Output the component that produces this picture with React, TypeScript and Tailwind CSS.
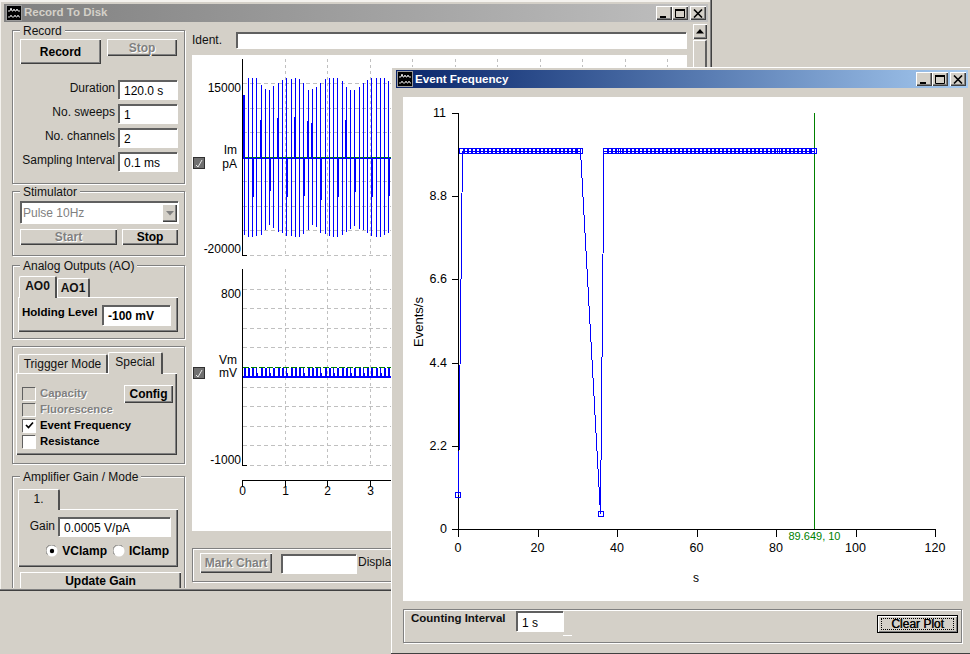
import React from "react";

const raised = "shadow-[inset_1px_1px_0_#fff,inset_-1px_-1px_0_#404040,inset_-2px_-2px_0_#808080]";
const sunken = "bg-white border-t-2 border-l-2 border-t-[#606060] border-l-[#606060] shadow-[1px_1px_0_#fff]";
const disabledText = "text-[#808080] [text-shadow:1px_1px_0_#fff]";

function Group({ label, className, children }: { label?: string; className: string; children?: React.ReactNode }) {
  return (
    <div className={"relative shrink-0 border border-[#808080] shadow-[inset_1px_1px_0_#fff,1px_1px_0_#fff] " + className}>
      {label && (
        <span className="absolute left-[7px] -top-[6px] bg-[#d4d0c8] px-[3px] text-[12px] leading-[13px] whitespace-nowrap text-[#111]">
          {label}
        </span>
      )}
      {children}
    </div>
  );
}

function Btn({ children, className, disabled, bold = true }: { children: React.ReactNode; className: string; disabled?: boolean; bold?: boolean }) {
  return (
    <div
      className={
        "flex shrink-0 items-center justify-center text-[12px] bg-[#d4d0c8] " +
        (bold ? "font-bold " : "") +
        raised + " " + (disabled ? disabledText + " " : "text-black ") + className
      }
    >
      {children}
    </div>
  );
}

function Field({ value, className, bold }: { value?: string; className: string; bold?: boolean }) {
  return (
    <div className={"flex shrink-0 items-center pl-[4px] pt-[1px] text-[12px] text-black whitespace-nowrap overflow-hidden " + (bold ? "font-bold " : "") + sunken + " " + className}>
      {value}
    </div>
  );
}

function LabelRow({ label, value }: { label: string; value: string }) {
  return (
    <div className="flex h-[19px] items-center justify-end gap-[3px] pr-[7px]">
      <span className="text-[12px] leading-none -mt-[3px] whitespace-nowrap text-[#111]">{label}</span>
      <Field value={value} className="w-[59px] h-[19px]" />
    </div>
  );
}

function Tab({ label, active, className }: { label: string; active?: boolean; className: string }) {
  return (
    <div
      className={
        "flex items-center justify-center rounded-t-[2px] border-t border-l border-t-white border-l-white border-r-2 border-r-[#505050] text-[12px] bg-[#d4d0c8] whitespace-nowrap text-[#111] " +
        (active ? "relative z-10 -mb-px " : "") +
        className
      }
    >
      {label}
    </div>
  );
}

function Check({ label, checked, disabled }: { label: string; checked?: boolean; disabled?: boolean }) {
  return (
    <div className="flex h-[16px] items-center gap-[5px]">
      <div className={"flex h-[13px] w-[13px] shrink-0 items-center justify-center border-t border-l border-t-[#606060] border-l-[#606060] shadow-[1px_1px_0_#fff] " + (disabled ? "bg-[#d4d0c8]" : "bg-white")}>
        {checked && (
          <svg width="9" height="9" viewBox="0 0 9 9">
            <path d="M1 4 L3.5 6.5 L8 1.5" fill="none" stroke="#000" strokeWidth="1.7" />
          </svg>
        )}
      </div>
      <span className={"text-[11.3px] font-bold whitespace-nowrap " + (disabled ? disabledText : "text-black")}>{label}</span>
    </div>
  );
}

function Radio({ label, on }: { label: string; on?: boolean }) {
  return (
    <div className="flex items-center gap-[4px]">
      <svg width="12" height="12" viewBox="0 0 12 12">
        <circle cx="6" cy="6" r="5.5" fill="#fff" />
        <path d="M1.5 9.5 A5.5 5.5 0 0 1 9.5 1.5" fill="none" stroke="#808080" strokeWidth="1" />
        {on && <circle cx="6" cy="6" r="2.2" fill="#000" />}
      </svg>
      <span className="text-[12px] font-bold text-black">{label}</span>
    </div>
  );
}

function AppIcon({ className }: { className: string }) {
  return (
    <svg viewBox="0 0 16 16" className={"shrink-0 " + className}>
      <rect x="0" y="0" width="16" height="16" fill="#000" />
      <rect x="0.5" y="0.5" width="15" height="15" fill="none" stroke="#9a9a9a" strokeWidth="1" />
      <path d="M2 6 H4 L5 3 L6 6 H7 L8 4 L9 6 H10 L11 4 L12 6 H14" fill="none" stroke="#e0e0e0" strokeWidth="1" />
      <path d="M2 12 H4 L5 10 L6 12 H8 L9 10 L10 12 H11 L12 10 L13 12 H14" fill="none" stroke="#c8c8c8" strokeWidth="1" />
    </svg>
  );
}

function WinButtons() {
  return (
    <div className="ml-auto flex items-center pr-[2px]">
      <div className={"flex h-[14px] w-[16px] items-center justify-center bg-[#d4d0c8] " + raised}>
        <svg width="10" height="9" viewBox="0 0 10 9"><rect x="1" y="7" width="6" height="2" fill="#000" /></svg>
      </div>
      <div className={"flex h-[14px] w-[16px] items-center justify-center bg-[#d4d0c8] " + raised}>
        <svg width="10" height="9" viewBox="0 0 10 9"><path d="M0.5 1 H9.5 V8.5 H0.5 Z" fill="none" stroke="#000" /><rect x="0" y="0" width="10" height="2" fill="#000" /></svg>
      </div>
      <div className={"ml-[2px] flex h-[14px] w-[16px] items-center justify-center bg-[#d4d0c8] " + raised}>
        <svg width="10" height="9" viewBox="0 0 10 9"><path d="M1 0.5 L9 8.5 M9 0.5 L1 8.5" fill="none" stroke="#000" strokeWidth="1.6" /></svg>
      </div>
    </div>
  );
}

const tops = [285,235,235,235,255,268,270,258,250,240,235,237,235,238,250,270,268,260,250,238,235,235,235,243,260,270,270,262,250,240,235,235,235,235,243];
const bots = [705,710,710,708,705,690,675,685,695,700,707,708,710,710,703,690,675,680,700,703,707,710,710,705,695,688,677,687,690,700,708,710,710,706,700];
const thickTop: Record<number, number> = { 0: 285, 4: 360, 8: 355, 12: 352, 15: 362, 16: 370, 24: 360 };
const thickBot: Record<number, number> = { 2: 590, 6: 572, 10: 590, 14: 587, 18: 600, 22: 590, 26: 575, 30: 590, 34: 587 };
const spikeX = (i: number) => Math.round(243.7 + 4.256 * i) + 0.5;
const gridX = [285.5, 327.5, 370.5, 412.5, 455.5, 497.5, 540.5, 582.5, 625.5, 667.5];

function RecordChart() {
  const g1 = [83.5, 108.5, 132.5, 181.5, 206.5, 230.5, 255.5];
  const g2 = [289.5, 308.5, 328.5, 347.5, 387.5, 406.5, 426.5, 445.5, 465.5];
  const shortBars = [3, 6, 10, 14, 18, 21, 25, 28, 32];
  return (
    <svg viewBox="192 55 495 476" className="block h-[476px] w-[495px]" shapeRendering="crispEdges">
      {gridX.map((x) => (
        <g key={x} stroke="#c0c0c0" strokeDasharray="3 3">
          <line x1={x} x2={x} y1={59} y2={255} />
          <line x1={x} x2={x} y1={269} y2={466} />
        </g>
      ))}
      {[...g1, ...g2].map((y) => (
        <line key={y} x1={243} x2={687} y1={y} y2={y} stroke="#c0c0c0" strokeDasharray="4 3" />
      ))}
      <line x1={243} x2={687} y1={157.5} y2={157.5} stroke="#008000" />
      {tops.map((t, i) => (
        <line key={"a" + i} x1={spikeX(i)} x2={spikeX(i)} y1={t / 3} y2={bots[i] / 3} stroke="#0000ff" />
      ))}
      {Object.entries(thickTop).map(([i, t]) => (
        <line key={"t" + i} x1={spikeX(+i) - 1} x2={spikeX(+i) - 1} y1={t / 3} y2={158} stroke="#0000ff" />
      ))}
      {Object.entries(thickBot).map(([i, t]) => (
        <line key={"b" + i} x1={spikeX(+i) + 1} x2={spikeX(+i) + 1} y1={158} y2={t / 3} stroke="#0000ff" />
      ))}
      <rect x={243} y={158} width={444} height={1} fill="#0000ff" />
      <line x1={243} x2={687} y1={367.5} y2={367.5} stroke="#008000" strokeDasharray="6 2" />
      {tops.map((_, i) => (
        <g key={"v" + i} stroke="#0000ff">
          <line x1={spikeX(i)} x2={spikeX(i)} y1={368} y2={377} />
          <line x1={spikeX(i) + 1} x2={spikeX(i) + 1} y1={shortBars.includes(i) ? 373 : 368} y2={377} />
        </g>
      ))}
      <rect x={243} y={376} width={444} height={2} fill="#0000ff" />
      <g stroke="#000">
        <line x1={242.5} x2={242.5} y1={59} y2={255.5} />
        <line x1={242.5} x2={247} y1={255.5} y2={255.5} />
        <line x1={242.5} x2={242.5} y1={269} y2={465.5} />
        <line x1={242.5} x2={247} y1={465.5} y2={465.5} />
        <line x1={242.5} x2={687} y1={480.5} y2={480.5} />
        {[242.5, ...gridX].map((x) => (
          <line key={x} x1={x} x2={x} y1={480} y2={487} />
        ))}
      </g>
      <g fontSize="12" fill="#000" textAnchor="end" dominantBaseline="central" shapeRendering="auto">
        <text x={241} y={88}>15000</text>
        <text x={241} y={249}>-20000</text>
        <text x={241} y={294}>800</text>
        <text x={241} y={460}>-1000</text>
        <text x={237} y={150}>Im</text>
        <text x={237} y={164}>pA</text>
        <text x={237} y={360}>Vm</text>
        <text x={237} y={373}>mV</text>
      </g>
      <g fontSize="12" fill="#000" textAnchor="middle" dominantBaseline="central" shapeRendering="auto">
        {[0, 1, 2, 3, 4, 5, 6, 7, 8, 9, 10].map((n, i) => (
          <text key={n} x={[242.5, ...gridX][i]} y={491}>{n}</text>
        ))}
      </g>
      {[157, 367].map((y) => (
        <g key={y}>
          <rect x={193.5} y={y + 0.5} width={11} height={11} rx={1} fill="#707070" stroke="#303030" />
          <path d={`M196 ${y + 8} L198 ${y + 10} L202 ${y + 3}`} fill="none" stroke="#e8e8e8" shapeRendering="auto" />
        </g>
      ))}
    </svg>
  );
}

function FreqChart() {
  const xs: number[] = [];
  for (let s = 1; s <= 30; s++) xs.push(458.5 + 3.975 * s);
  xs.push(580);
  for (let s = 37; s <= 89; s++) xs.push(458.5 + 3.975 * s);
  xs.push(814);
  const ys = [
    ["11", 113], ["8.8", 196], ["6.6", 279], ["4.4", 363], ["2.2", 446], ["0", 529],
  ] as const;
  const squares = xs.map((x) => Math.round(x));
  return (
    <svg viewBox="403 97 560 504" className="block h-[504px] w-[560px]">
      <g shapeRendering="crispEdges">
        <line x1={814.5} x2={814.5} y1={113} y2={529} stroke="#008000" />
        <line x1={458.5} x2={458.5} y1={113} y2={529} stroke="#000" />
        <line x1={458} x2={936} y1={529.5} y2={529.5} stroke="#000" />
        {ys.map(([, y]) => (
          <line key={y} x1={452} x2={458} y1={y + 0.5} y2={y + 0.5} stroke="#000" />
        ))}
        {[0, 20, 40, 60, 80, 100, 120].map((n) => (
          <line key={n} x1={Math.round(458 + 3.975 * n) + 0.5} x2={Math.round(458 + 3.975 * n) + 0.5} y1={529} y2={537} stroke="#000" />
        ))}
      </g>
      <path d="M458.5 495 L462.5 151 H580.5 L600.5 514 L604 151 H815" fill="none" stroke="#0000ff" strokeWidth="1" shapeRendering="crispEdges" />
      <g shapeRendering="crispEdges" fill="none" stroke="#0000ff">
        {squares.map((x) => (
          <rect key={x} x={x - 2.5} y={148.5} width={5} height={5} />
        ))}
        <rect x={455.5} y={492.5} width={5} height={5} />
        <rect x={598.5} y={511.5} width={5} height={5} />
      </g>
      <g fontSize="12.5" fill="#000" textAnchor="end" dominantBaseline="central">
        {ys.map(([t, y]) => (
          <text key={t} x={t === "11" ? 446 : 447} y={y}>{t}</text>
        ))}
      </g>
      <g fontSize="12.5" fill="#000" textAnchor="middle" dominantBaseline="central">
        {[0, 20, 40, 60, 80, 100, 120].map((n) => (
          <text key={n} x={458 + 3.975 * n} y={548}>{n}</text>
        ))}
        <text x={696} y={578} fontSize="12">s</text>
        <text x={418} y={322} fontSize="13" transform="rotate(-90 418 322)">Events/s</text>
      </g>
      <text x={814.5} y={536} fontSize="11" fill="#008000" textAnchor="middle" dominantBaseline="central">89.649, 10</text>
    </svg>
  );
}

function RecordWindow() {
  return (
    <div className="absolute left-0 top-0 h-[591px] w-[712px] bg-[#d4d0c8] pt-[4px] shadow-[inset_-1px_-1px_0_#404040,inset_-2px_-2px_0_#808080,inset_1px_2px_0_#f4f2ee]">
      <div className="ml-[4px] mr-[4px] flex h-[18px] items-center bg-gradient-to-r from-[#808080] to-[#c0c0c0] pl-[2px]">
        <AppIcon className="h-[16px] w-[16px]" />
        <span className="ml-[2px] text-[11.5px] font-bold text-[#d4d0c8]">Record To Disk</span>
        <WinButtons />
      </div>
      <div className="flex h-[566px] overflow-hidden pl-[12px]">
        <div className="flex w-[173px] shrink-0 flex-col pt-[8px]">
          <Group label="Record" className="h-[154px]">
            <div className="flex items-start gap-[6px] pl-[7px] pt-[8px]">
              <Btn className="h-[25px] w-[81px]">Record</Btn>
              <Btn disabled className="h-[17px] w-[70px]">Stop</Btn>
            </div>
            <div className="mt-[16px] flex flex-col gap-[5px]">
              <LabelRow label="Duration" value="120.0 s" />
              <LabelRow label="No. sweeps" value="1" />
              <LabelRow label="No. channels" value="2" />
              <LabelRow label="Sampling Interval" value="0.1 ms" />
            </div>
          </Group>
          <Group label="Stimulator" className="mt-[7px] h-[65px]">
            <div className="ml-[7px] mt-[9px] flex h-[22px] w-[158px] items-center justify-between pl-[1px] pr-[1px] text-[12px] text-[#808080] bg-white border-t-2 border-l-2 border-t-[#606060] border-l-[#606060] shadow-[1px_1px_0_#fff]">
              <span>Pulse 10Hz</span>
              <div className={"flex h-[18px] w-[15px] items-center justify-center bg-[#d4d0c8] " + raised}>
                <svg width="8" height="5" viewBox="0 0 8 5"><path d="M0 0 H8 L4 4.5 Z" fill="#808080" /></svg>
              </div>
            </div>
            <div className="ml-[7px] mt-[6px] flex gap-[5px]">
              <Btn disabled className="h-[16px] w-[97px]">Start</Btn>
              <Btn className="h-[16px] w-[56px]">Stop</Btn>
            </div>
          </Group>
          <Group label="Analog Outputs (AO)" className="mt-[9px] h-[74px]">
            <div className="ml-[6px] mt-[9px] flex h-[22px] items-end">
              <Tab active label="AO0" className="h-[22px] w-[38px] pb-[4px] font-bold" />
              <Tab label="AO1" className="h-[19px] w-[33px] pb-[1px] font-bold" />
            </div>
            <div className={"ml-[5px] flex h-[35px] w-[160px] items-center pl-[4px] " + raised}>
              <span className="w-[80px] shrink-0 text-[11.5px] font-bold whitespace-nowrap -mt-[3px] text-black">Holding Level</span>
              <Field bold value="-100 mV" className="h-[20px] w-[68px]" />
            </div>
          </Group>
          <Group className="mt-[7px] h-[118px]">
            <div className="ml-[5px] mt-[4px] flex h-[22px] items-end">
              <Tab label="Triggger Mode" className="h-[19px] w-[90px]" />
              <Tab active label="Special" className="h-[22px] w-[55px] pb-[3px]" />
            </div>
            <div className={"ml-[3px] flex h-[82px] w-[161px] items-start pl-[6px] pr-[4px] pt-[12px] " + raised}>
              <div className="flex w-[100px] shrink-0 flex-col">
                <Check disabled label="Capacity" />
                <Check disabled label="Fluorescence" />
                <Check checked label="Event Frequency" />
                <Check label="Resistance" />
              </div>
              <Btn className="relative ml-auto h-[18px] w-[49px]">Config</Btn>
            </div>
          </Group>
          <Group label="Amplifier Gain / Mode" className="mt-[12px] h-[130px]">
            <div className="ml-[5px] mt-[11px] flex h-[21px] items-end">
              <Tab active label="1." className="h-[21px] w-[42px] pb-[2px]" />
            </div>
            <div className={"ml-[5px] flex h-[58px] w-[160px] flex-col pt-[8px] " + raised}>
              <div className="flex items-center justify-end pr-[8px]">
                <span className="mr-[3px] -mt-[2px] text-[12px] text-[#111]">Gain</span>
                <Field value="0.0005 V/pA" className="h-[19px] w-[112px]" />
              </div>
              <div className="mt-[6px] flex items-center justify-end gap-[6px] pr-[9px]">
                <Radio on label="VClamp" />
                <Radio label="IClamp" />
              </div>
            </div>
            <Btn className="ml-[7px] mt-[5px] h-[24px] w-[161px] pb-[7px]">Update Gain</Btn>
          </Group>
        </div>
        <div className="ml-[7px] flex w-[495px] shrink-0 flex-col pt-[10px]">
          <div className="flex h-[16px] items-center">
            <span className="w-[44px] text-[12px] text-[#111]">Ident.</span>
            <Field className="h-[16px] w-[450px]" />
          </div>
          <div className="mt-[7px] h-[476px] shrink-0 bg-white">
            <RecordChart />
          </div>
          <Group className="mt-[17px] h-[34px] w-[495px]">
            <div className="flex items-start pl-[7px] pt-[4px]">
              <Btn disabled className="h-[20px] w-[72px]">Mark Chart</Btn>
              <Field className="ml-[9px] mt-[1px] h-[19px] w-[75px]" />
              <span className="ml-[2px] text-[12px] text-[#111]">Display</span>
            </div>
          </Group>
        </div>
        <div className="ml-[6px] flex w-[14px] shrink-0 flex-col pt-[2px]">
          <div className={"flex h-[15px] w-[14px] items-center justify-center bg-[#d4d0c8] " + raised}>
            <svg width="8" height="5" viewBox="0 0 8 5"><path d="M4 0 L8 4.5 H0 Z" fill="#000" /></svg>
          </div>
          <div className="mt-[1px] h-[200px] border-l border-t border-white border-r-2 border-r-[#606060]" />
        </div>
      </div>
    </div>
  );
}

function FrequencyWindow() {
  return (
    <div className="absolute left-[391px] top-[67px] h-[586px] w-[585px] bg-[#d4d0c8] pt-[3px] shadow-[inset_1px_1px_0_#fff,0_1px_0_#404040]">
      <div className="ml-[5px] flex h-[18px] w-[572px] items-center bg-gradient-to-r from-[#0a246a] to-[#a6caf0] pl-[1px]">
        <AppIcon className="h-[16px] w-[16px]" />
        <span className="ml-[2px] text-[11.6px] font-bold text-white">Event Frequency</span>
        <WinButtons />
      </div>
      <div className="ml-[12px] mt-[9px] h-[504px] w-[560px] bg-white">
        <FreqChart />
      </div>
      <Group className="ml-[12px] mt-[8px] h-[34px] w-[559px]">
        <div className="flex items-start pl-[7px] pr-[3px] pt-[1px]">
          <span className="-mt-[1px] w-[105px] text-[11.5px] font-bold text-[#111] whitespace-nowrap">Counting Interval</span>
          <Field value="1 s" className="h-[20px] w-[47px]" />
          <div className="ml-0 mt-[24px] h-px w-[9px] bg-white" />
          <div className="ml-auto mt-[4px] flex h-[18px] w-[81px] items-center justify-center border border-black bg-[#d4d0c8] shadow-[inset_1px_1px_0_#fff,inset_-1px_-1px_0_#808080]">
            <div className="flex h-[12px] w-[73px] items-center justify-center border border-dotted border-black text-[12px] text-black [text-shadow:0.5px_0_0_#222]">
              Clear Plot
            </div>
          </div>
        </div>
      </Group>
    </div>
  );
}

export default function App() {
  return (
    <div className="relative h-[654px] w-[970px] overflow-hidden bg-[#d4d0c8] font-[Liberation_Sans,sans-serif]">
      <RecordWindow />
      <FrequencyWindow />
    </div>
  );
}
